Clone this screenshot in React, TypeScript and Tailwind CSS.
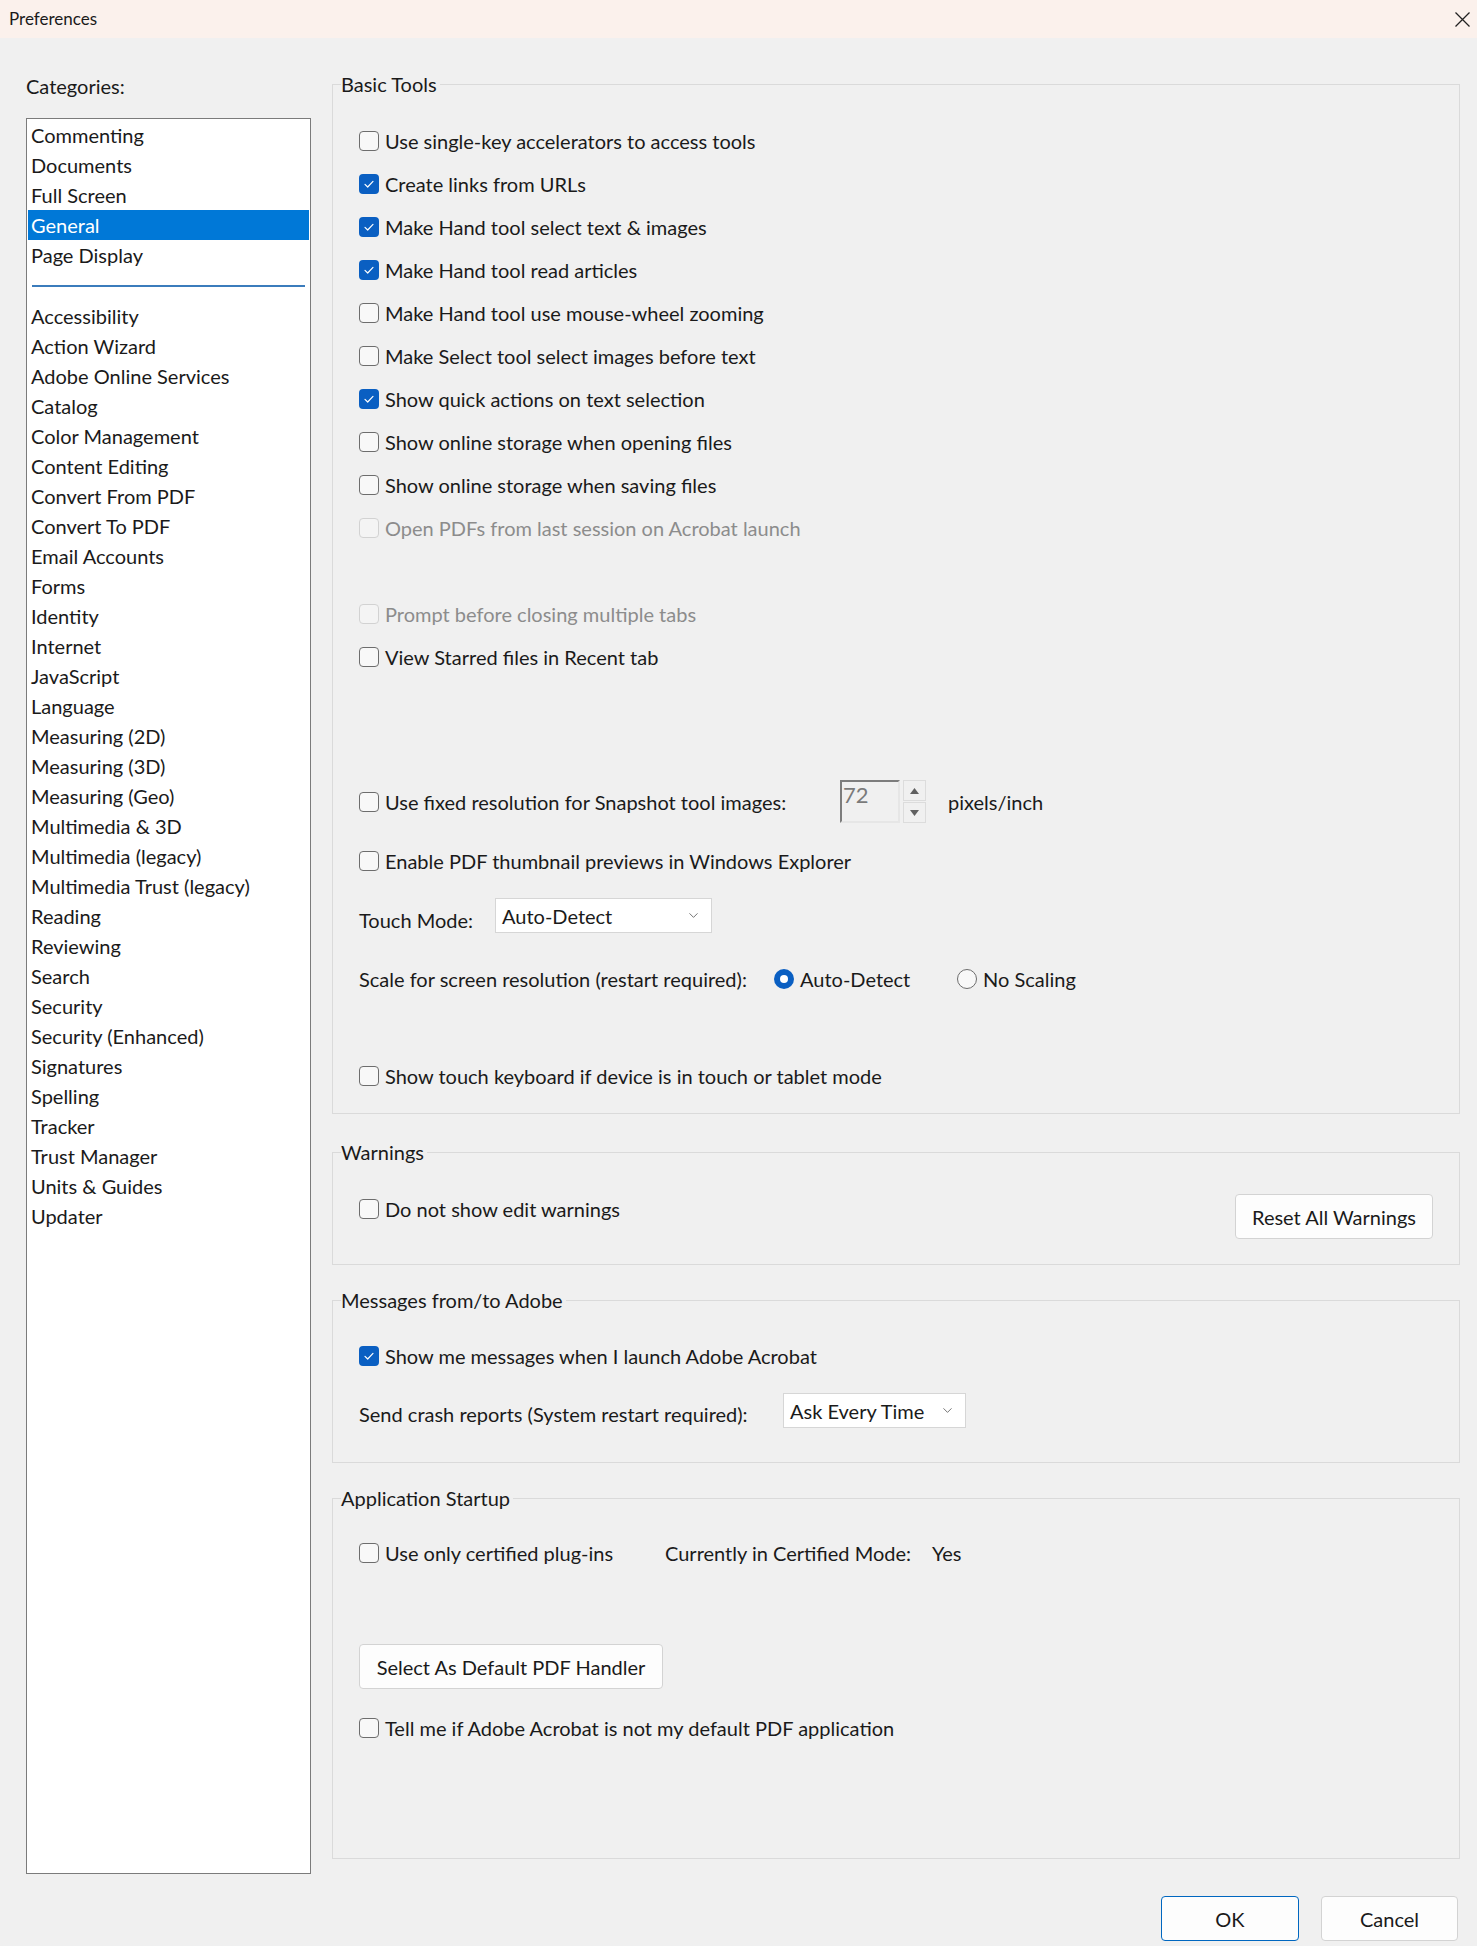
import { ChevronDown } from "lucide-react";

const font = { fontFamily: "Lato, 'Noto Sans', sans-serif" };

const topCats = ["Commenting", "Documents", "Full Screen", "General", "Page Display"];
const moreCats = [
  "Accessibility",
  "Action Wizard",
  "Adobe Online Services",
  "Catalog",
  "Color Management",
  "Content Editing",
  "Convert From PDF",
  "Convert To PDF",
  "Email Accounts",
  "Forms",
  "Identity",
  "Internet",
  "JavaScript",
  "Language",
  "Measuring (2D)",
  "Measuring (3D)",
  "Measuring (Geo)",
  "Multimedia & 3D",
  "Multimedia (legacy)",
  "Multimedia Trust (legacy)",
  "Reading",
  "Reviewing",
  "Search",
  "Security",
  "Security (Enhanced)",
  "Signatures",
  "Spelling",
  "Tracker",
  "Trust Manager",
  "Units & Guides",
  "Updater",
];

function Box({ checked, disabled }: { checked?: boolean; disabled?: boolean }) {
  if (checked) {
    return (
      <span className="flex h-[20px] w-[20px] shrink-0 items-center justify-center rounded-[4px] bg-[#0a5fc2]">
        <svg width="20" height="20" viewBox="0 0 20 20" fill="none">
          <path d="M6 10.3l2.7 2.7 5.3-5.6" stroke="white" strokeWidth="1.2" strokeLinecap="round" strokeLinejoin="round" />
        </svg>
      </span>
    );
  }
  return (
    <span
      className={`h-[20px] w-[20px] shrink-0 rounded-[4px] border ${
        disabled ? "border-[#d2d2d2] bg-[#f4f4f4]" : "border-[#6d6d6d] bg-[#f8f8f8]"
      }`}
    />
  );
}

function Check({ label, checked, disabled }: { label: string; checked?: boolean; disabled?: boolean }) {
  return (
    <div className="flex h-[43px] items-center gap-[6px]">
      <Box checked={checked} disabled={disabled} />
      <span className={disabled ? "text-[#8c8c8c]" : ""}>{label}</span>
    </div>
  );
}

function Radio({ on }: { on?: boolean }) {
  if (on) {
    return (
      <span className="flex h-[20px] w-[20px] items-center justify-center rounded-full bg-[#0a5fc2]">
        <span className="h-[8px] w-[8px] rounded-full bg-white" />
      </span>
    );
  }
  return <span className="h-[20px] w-[20px] rounded-full border border-[#6d6d6d] bg-[#f8f8f8]" />;
}

function Select({ value, width }: { value: string; width: string }) {
  return (
    <div className={`flex h-[35px] items-center justify-between border border-[#d6d6d6] bg-white pl-[6px] pr-[10px] ${width}`}>
      <span>{value}</span>
      <ChevronDown size={15} strokeWidth={1.3} className="text-[#555]" />
    </div>
  );
}

function Group({ title, children }: { title: string; children: React.ReactNode }) {
  return (
    <fieldset className="border border-[#dadada] px-[8px]">
      <legend className="pr-[3px] text-[20px] leading-[28px]">{title}</legend>
      <div className="px-[18px]">{children}</div>
    </fieldset>
  );
}

function Button({ label, className }: { label: string; className: string }) {
  return (
    <div className={`flex h-[45px] items-center justify-center rounded-[4px] border bg-[#fdfdfd] ${className}`}>
      {label}
    </div>
  );
}

export default function App() {
  return (
    <div className="flex h-[1946px] w-[1477px] flex-col bg-[#f0f0f0] text-[20px] leading-[28px] text-[#1a1a1a]" style={font}>
      {/* title bar */}
      <div className="flex h-[38px] items-center justify-between bg-[#fbf1ec] pl-[9px] pr-[6px]">
        <span className="text-[17px]">Preferences</span>
        <svg width="15" height="15" viewBox="0 0 15 15" className="mr-[1px]">
          <path d="M0.5 0.5l14 14M14.5 0.5l-14 14" stroke="#222" strokeWidth="1.3" />
        </svg>
      </div>

      <div className="flex gap-[21px] pl-[26px] pt-[32px]">
        {/* categories */}
        <div className="w-[285px] pt-[2px]">
          <div>Categories:</div>
          <div className="mt-[18px] h-[1756px] border border-[#7b7b7b] bg-white px-[1px] pt-[1px]">
            {topCats.map((c) => (
              <div
                key={c}
                className={`h-[30px] pl-[3px] leading-[30px] ${c === "General" ? "bg-[#0078d7] text-white" : ""}`}
              >
                {c}
              </div>
            ))}
            <div className="mx-[4px] mb-[14px] mt-[15px] h-[2px] bg-[#3b7cbc]" />
            {moreCats.map((c) => (
              <div key={c} className="h-[30px] pl-[3px] leading-[30px]">
                {c}
              </div>
            ))}
          </div>
        </div>

        {/* settings */}
        <div className="flex w-[1128px] flex-col">
          <Group title="Basic Tools">
            <div className="pb-[16px] pt-[21px]">
              <Check label="Use single-key accelerators to access tools" />
              <Check label="Create links from URLs" checked />
              <Check label="Make Hand tool select text & images" checked />
              <Check label="Make Hand tool read articles" checked />
              <Check label="Make Hand tool use mouse-wheel zooming" />
              <Check label="Make Select tool select images before text" />
              <Check label="Show quick actions on text selection" checked />
              <Check label="Show online storage when opening files" />
              <Check label="Show online storage when saving files" />
              <Check label="Open PDFs from last session on Acrobat launch" disabled />
              <div className="h-[43px]" />
              <Check label="Prompt before closing multiple tabs" disabled />
              <Check label="View Starred files in Recent tab" />

              <div className="mt-[102px] flex h-[43px] items-center">
                <div className="flex w-[481px] items-center gap-[6px]">
                  <Box />
                  <span>Use fixed resolution for Snapshot tool images:</span>
                </div>
                <div className="flex items-center gap-[3px]">
                  <div className="h-[43px] w-[60px] border-2 border-[#7d7d7d] border-b-[#e6e6e6] border-r-[#e6e6e6] pl-[1px] text-[22px] leading-[26px] text-[#7a7a7a]">
                    72
                  </div>
                  <div className="flex h-[43px] w-[23px] flex-col gap-[1px]">
                    <div className="flex flex-1 items-center justify-center border border-[#dcdcdc]">
                      <svg width="9" height="6" viewBox="0 0 9 6">
                        <path d="M0 6h9L4.5 0z" fill="#606060" />
                      </svg>
                    </div>
                    <div className="flex flex-1 items-center justify-center border border-[#dcdcdc]">
                      <svg width="9" height="6" viewBox="0 0 9 6">
                        <path d="M0 0h9L4.5 6z" fill="#606060" />
                      </svg>
                    </div>
                  </div>
                </div>
                <span className="ml-[22px]">pixels/inch</span>
              </div>

              <div className="mt-[16px]">
                <Check label="Enable PDF thumbnail previews in Windows Explorer" />
              </div>

              <div className="mt-[15px] flex h-[43px] items-center">
                <span className="w-[136px] pt-[2px]">Touch Mode:</span>
                <div className="mb-[6px]">
                  <Select value="Auto-Detect" width="w-[217px]" />
                </div>
              </div>

              <div className="mt-[17px] flex h-[43px] items-center">
                <span className="w-[415px]">Scale for screen resolution (restart required):</span>
                <div className="flex w-[183px] items-center gap-[6px]">
                  <Radio on />
                  <span>Auto-Detect</span>
                </div>
                <div className="flex items-center gap-[6px]">
                  <Radio />
                  <span>No Scaling</span>
                </div>
              </div>

              <div className="mt-[54px]">
                <Check label="Show touch keyboard if device is in touch or tablet mode" />
              </div>
            </div>
          </Group>

          <div className="mt-[24px]">
            <Group title="Warnings">
              <div className="flex items-start justify-between pb-[25px] pt-[21px]">
                <Check label="Do not show edit warnings" />
                <Button label="Reset All Warnings" className="mt-[7px] h-[44px] w-[198px] border-[#d3d3d3]" />
              </div>
            </Group>
          </div>

          <div className="mt-[21px]">
            <Group title="Messages from/to Adobe">
              <div className="pb-[34px] pt-[20px]">
                <Check label="Show me messages when I launch Adobe Acrobat" checked />
                <div className="mt-[16px] flex items-start">
                  <span className="w-[424px] pt-[7px]">Send crash reports (System restart required):</span>
                  <div className="h-[34px]">
                    <Select value="Ask Every Time" width="h-[34px] w-[183px]" />
                  </div>
                </div>
              </div>
            </Group>
          </div>

          <div className="mt-[21px]">
            <Group title="Application Startup">
              <div className="pb-[109px] pt-[19px]">
                <div className="flex h-[43px] items-center">
                  <div className="flex w-[306px] items-center gap-[6px]">
                    <Box />
                    <span>Use only certified plug-ins</span>
                  </div>
                  <span className="w-[267px]">Currently in Certified Mode:</span>
                  <span>Yes</span>
                </div>
                <Button label="Select As Default PDF Handler" className="mt-[70px] w-[304px] border-[#d3d3d3]" />
                <div className="mt-[17px]">
                  <Check label="Tell me if Adobe Acrobat is not my default PDF application" />
                </div>
              </div>
            </Group>
          </div>
        </div>
      </div>

      {/* footer */}
      <div className="flex justify-end gap-[22px] pr-[19px] pt-[22px]">
        <Button label="OK" className="w-[138px] border-[#0067c0]" />
        <Button label="Cancel" className="w-[137px] border-[#d3d3d3]" />
      </div>
    </div>
  );
}
